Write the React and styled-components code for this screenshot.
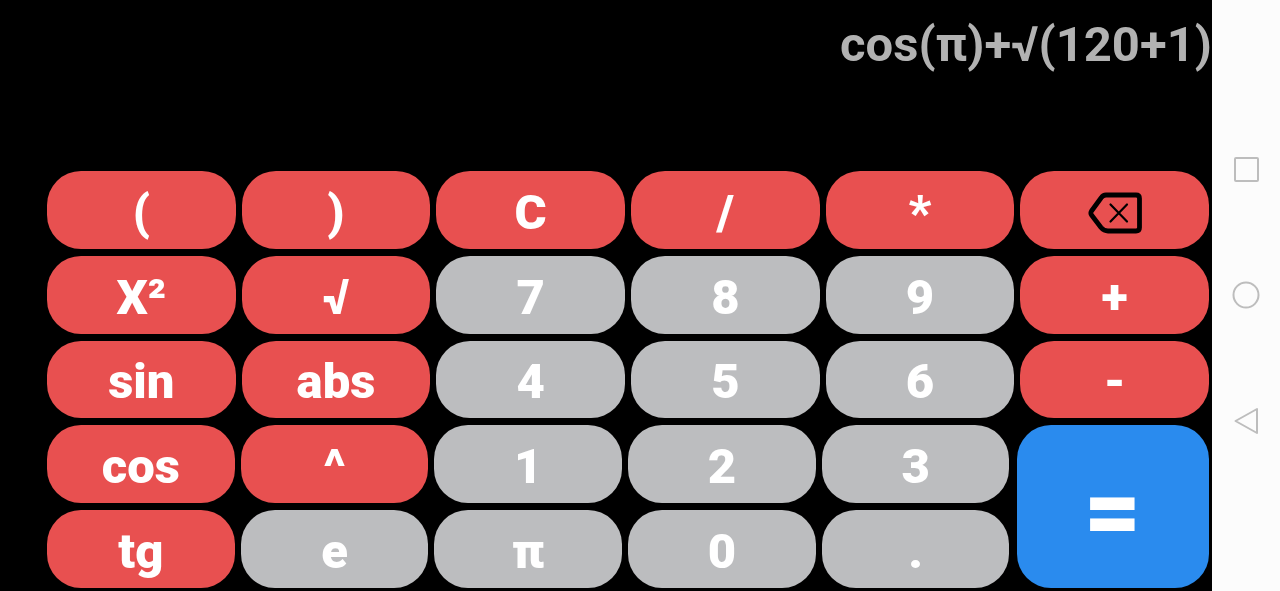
import React from "react";
import styled, { createGlobalStyle } from "styled-components";

const GlobalStyle = createGlobalStyle`
  *, *::before, *::after { box-sizing: border-box; }
  body { margin: 0; background: #000; font-family: Roboto, "Liberation Sans", sans-serif; }
`;

const tones = { red: "#e85050", grey: "#bcbdbf", blue: "#2a8bee" };

const Screen = styled.div`
  display: flex;
  min-height: 100vh;
`;

const Calculator = styled.main`
  flex: 1;
  min-width: 0;
  display: flex;
  flex-direction: column;
  background: #000;
`;

const Display = styled.output`
  display: block;
  height: 171px;
  padding-top: 15px;
  color: #b2b2b2;
  font-size: 49px;
  font-weight: 700;
  line-height: 60px;
  text-align: right;
  white-space: nowrap;
`;

const Keypad = styled.div`
  flex: 1;
  display: grid;
  grid-template-rows: repeat(5, 1fr);
  row-gap: 7px;
  padding: 0 3px 3px 47px;
`;

const KeyRow = styled.div`
  display: grid;
  grid-template-columns: repeat(6, 1fr);
  column-gap: 6px;
`;

const LowerKeys = styled.div`
  grid-row: span 2;
  display: grid;
  grid-template-columns: 5fr 1fr;
  column-gap: 7px;
`;

const LowerPad = styled.div`
  display: grid;
  grid-template-columns: repeat(5, 1fr);
  grid-template-rows: repeat(2, 1fr);
  gap: 7px 6px;
`;

const Key = styled.button`
  display: flex;
  align-items: center;
  justify-content: center;
  min-width: 0;
  margin: 0;
  padding: ${({ $large }) => ($large ? "10px 0 0" : "6px 0 0")};
  border: 0;
  border-radius: 34px;
  background: ${({ $tone }) => tones[$tone]};
  color: #fff;
  font-family: inherit;
  font-size: ${({ $large }) => ($large ? "98px" : "49px")};
  font-weight: 900;
  line-height: 60px;
  cursor: pointer;
`;

const NavBar = styled.nav`
  flex: 0 0 68px;
  display: flex;
  flex-direction: column;
  align-items: center;
  justify-content: center;
  gap: 98px;
  padding-bottom: 2px;
  background: #fcfcfc;
`;

const NavButton = styled.button`
  display: flex;
  padding: 0;
  border: 0;
  background: none;
  cursor: pointer;
`;

const NavIcon = styled.svg`
  width: 28px;
  height: 28px;
  fill: none;
  stroke: #bdbdbd;
  stroke-width: 2;
  stroke-linejoin: round;
`;

const EraseIcon = () => (
  <svg width="54" height="42" viewBox="0 0 54 42" fill="none" stroke="#000" aria-hidden="true">
    <path
      d="M18 3H48Q51.500 3 51.500 6.500V35.500Q51.500 39 48 39H20Q16 39 13 35.500L3.500 23Q2.200 21 3.500 19L13 6Q15 3 18 3Z"
      strokeWidth="4.800"
      strokeLinejoin="round"
    />
    <path d="M22.500 12.500L39 29.500M39 12.500L22.500 29.500" strokeWidth="2.200" strokeLinecap="round" />
  </svg>
);

const upperRows = [
  ["(", ")", "C", "/", "*", "erase"],
  ["X²", "√", "7", "8", "9", "+"],
  ["sin", "abs", "4", "5", "6", "-"],
];
const lowerKeys = ["cos", "^", "1", "2", "3", "tg", "e", "π", "0", "."];

const toneOf = (label) => (/^[0-9eπ.]$/.test(label) ? "grey" : "red");

const CalcKey = ({ label }) => (
  <Key type="button" $tone={toneOf(label)} aria-label={label === "erase" ? "Erase" : undefined}>
    {label === "erase" ? <EraseIcon /> : label}
  </Key>
);

export default function App() {
  return (
    <Screen>
      <GlobalStyle />
      <Calculator>
        <Display>cos(π)+√(120+1)</Display>
        <Keypad>
          {upperRows.map((row) => (
            <KeyRow key={row[0]}>
              {row.map((label) => <CalcKey key={label} label={label} />)}
            </KeyRow>
          ))}
          <LowerKeys>
            <LowerPad>
              {lowerKeys.map((label) => <CalcKey key={label} label={label} />)}
            </LowerPad>
            <Key type="button" $tone="blue" $large>=</Key>
          </LowerKeys>
        </Keypad>
      </Calculator>
      <NavBar aria-label="System">
        <NavButton type="button" aria-label="Recent apps">
          <NavIcon viewBox="0 0 28 28"><rect x="3" y="3" width="23" height="23" rx="1" /></NavIcon>
        </NavButton>
        <NavButton type="button" aria-label="Home">
          <NavIcon viewBox="0 0 28 28"><circle cx="14" cy="14" r="12.500" /></NavIcon>
        </NavButton>
        <NavButton type="button" aria-label="Back">
          <NavIcon viewBox="0 0 28 28"><path d="M25 2V26L3.500 14Z" /></NavIcon>
        </NavButton>
      </NavBar>
    </Screen>
  );
}
